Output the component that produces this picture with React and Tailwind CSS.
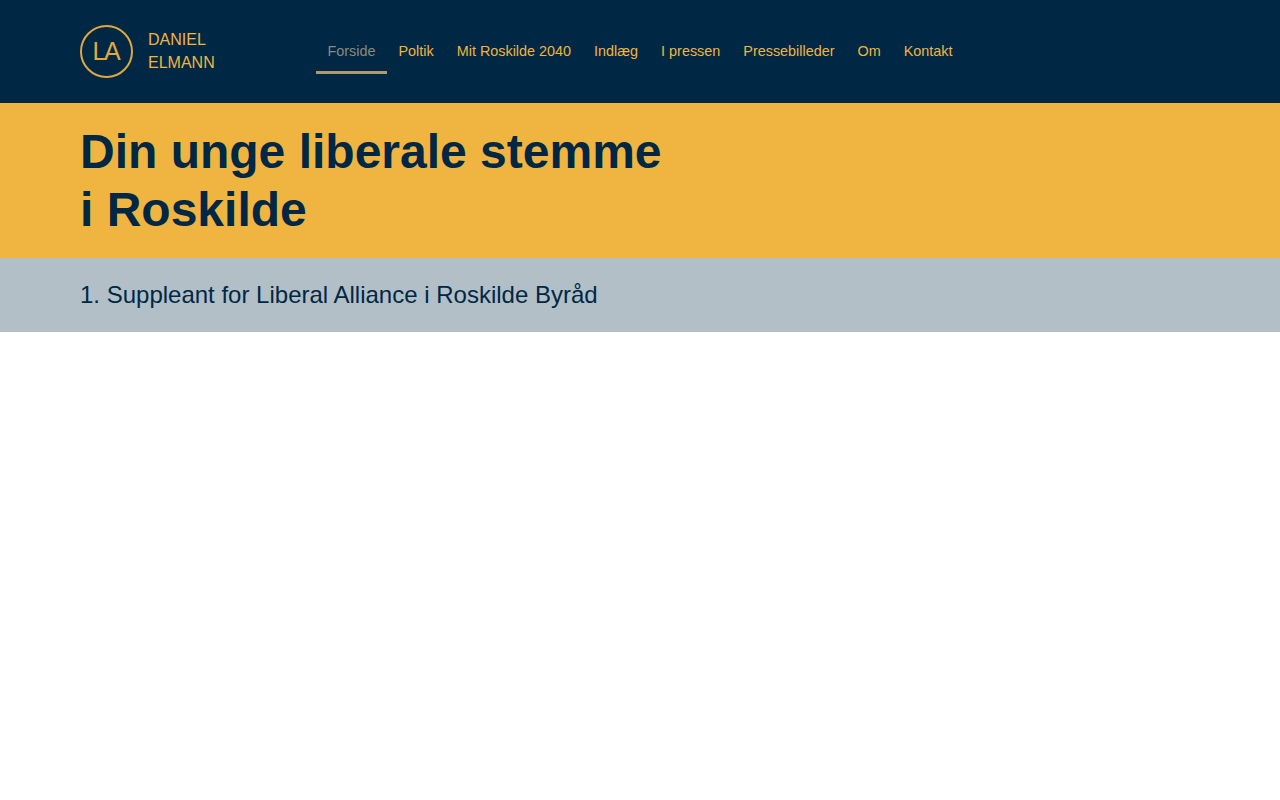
const links = ["Poltik", "Mit Roskilde 2040", "Indlæg", "I pressen", "Pressebilleder", "Om", "Kontakt"]

const App = () => {
    return (
        <div className="min-h-[800px] bg-white font-['Liberation_Sans',Arial,sans-serif]">
            <header className="h-[103px] bg-[#002845] px-20 flex items-start">
                <div className="w-[236px] pt-[25px] flex items-center shrink-0">
                    <div className="w-[53px] h-[53px] pr-[2px] rounded-full border-2 border-[#e0a83f] flex items-center justify-center text-[25px] tracking-[-2.4px] text-[#e0a83f]">
                        LA
                    </div>
                    <div className="ml-[15px] -mt-[1px] text-base leading-[23px] text-[#f0b441]">
                        DANIEL
                        <br />
                        ELMANN
                    </div>
                </div>
                <nav className="flex pt-[29px] text-[14.4px] text-[#f0b441]">
                    <a className="h-[45px] px-[11.5px] pt-[14px] leading-[17px] text-[#8c8a7c] border-b-[3px] border-[#ad9a72]">Forside</a>
                    {links.map((link) => (
                        <a key={link} className="h-[45px] px-[11.5px] pt-[14px] leading-[17px]">
                            {link}
                        </a>
                    ))}
                </nav>
            </header>
            <div className="h-[155px] bg-[#f0b441] px-20 pt-5">
                <h1 className="text-[48px] leading-[58px] font-bold text-[#002845]">
                    Din unge liberale stemme
                    <br />i Roskilde
                </h1>
            </div>
            <div className="h-[74px] bg-[#b2bfc7] px-20 flex items-center">
                <h2 className="text-2xl text-[#002845]">1. Suppleant for Liberal Alliance i Roskilde Byråd</h2>
            </div>
        </div>
    )
}

export default App
